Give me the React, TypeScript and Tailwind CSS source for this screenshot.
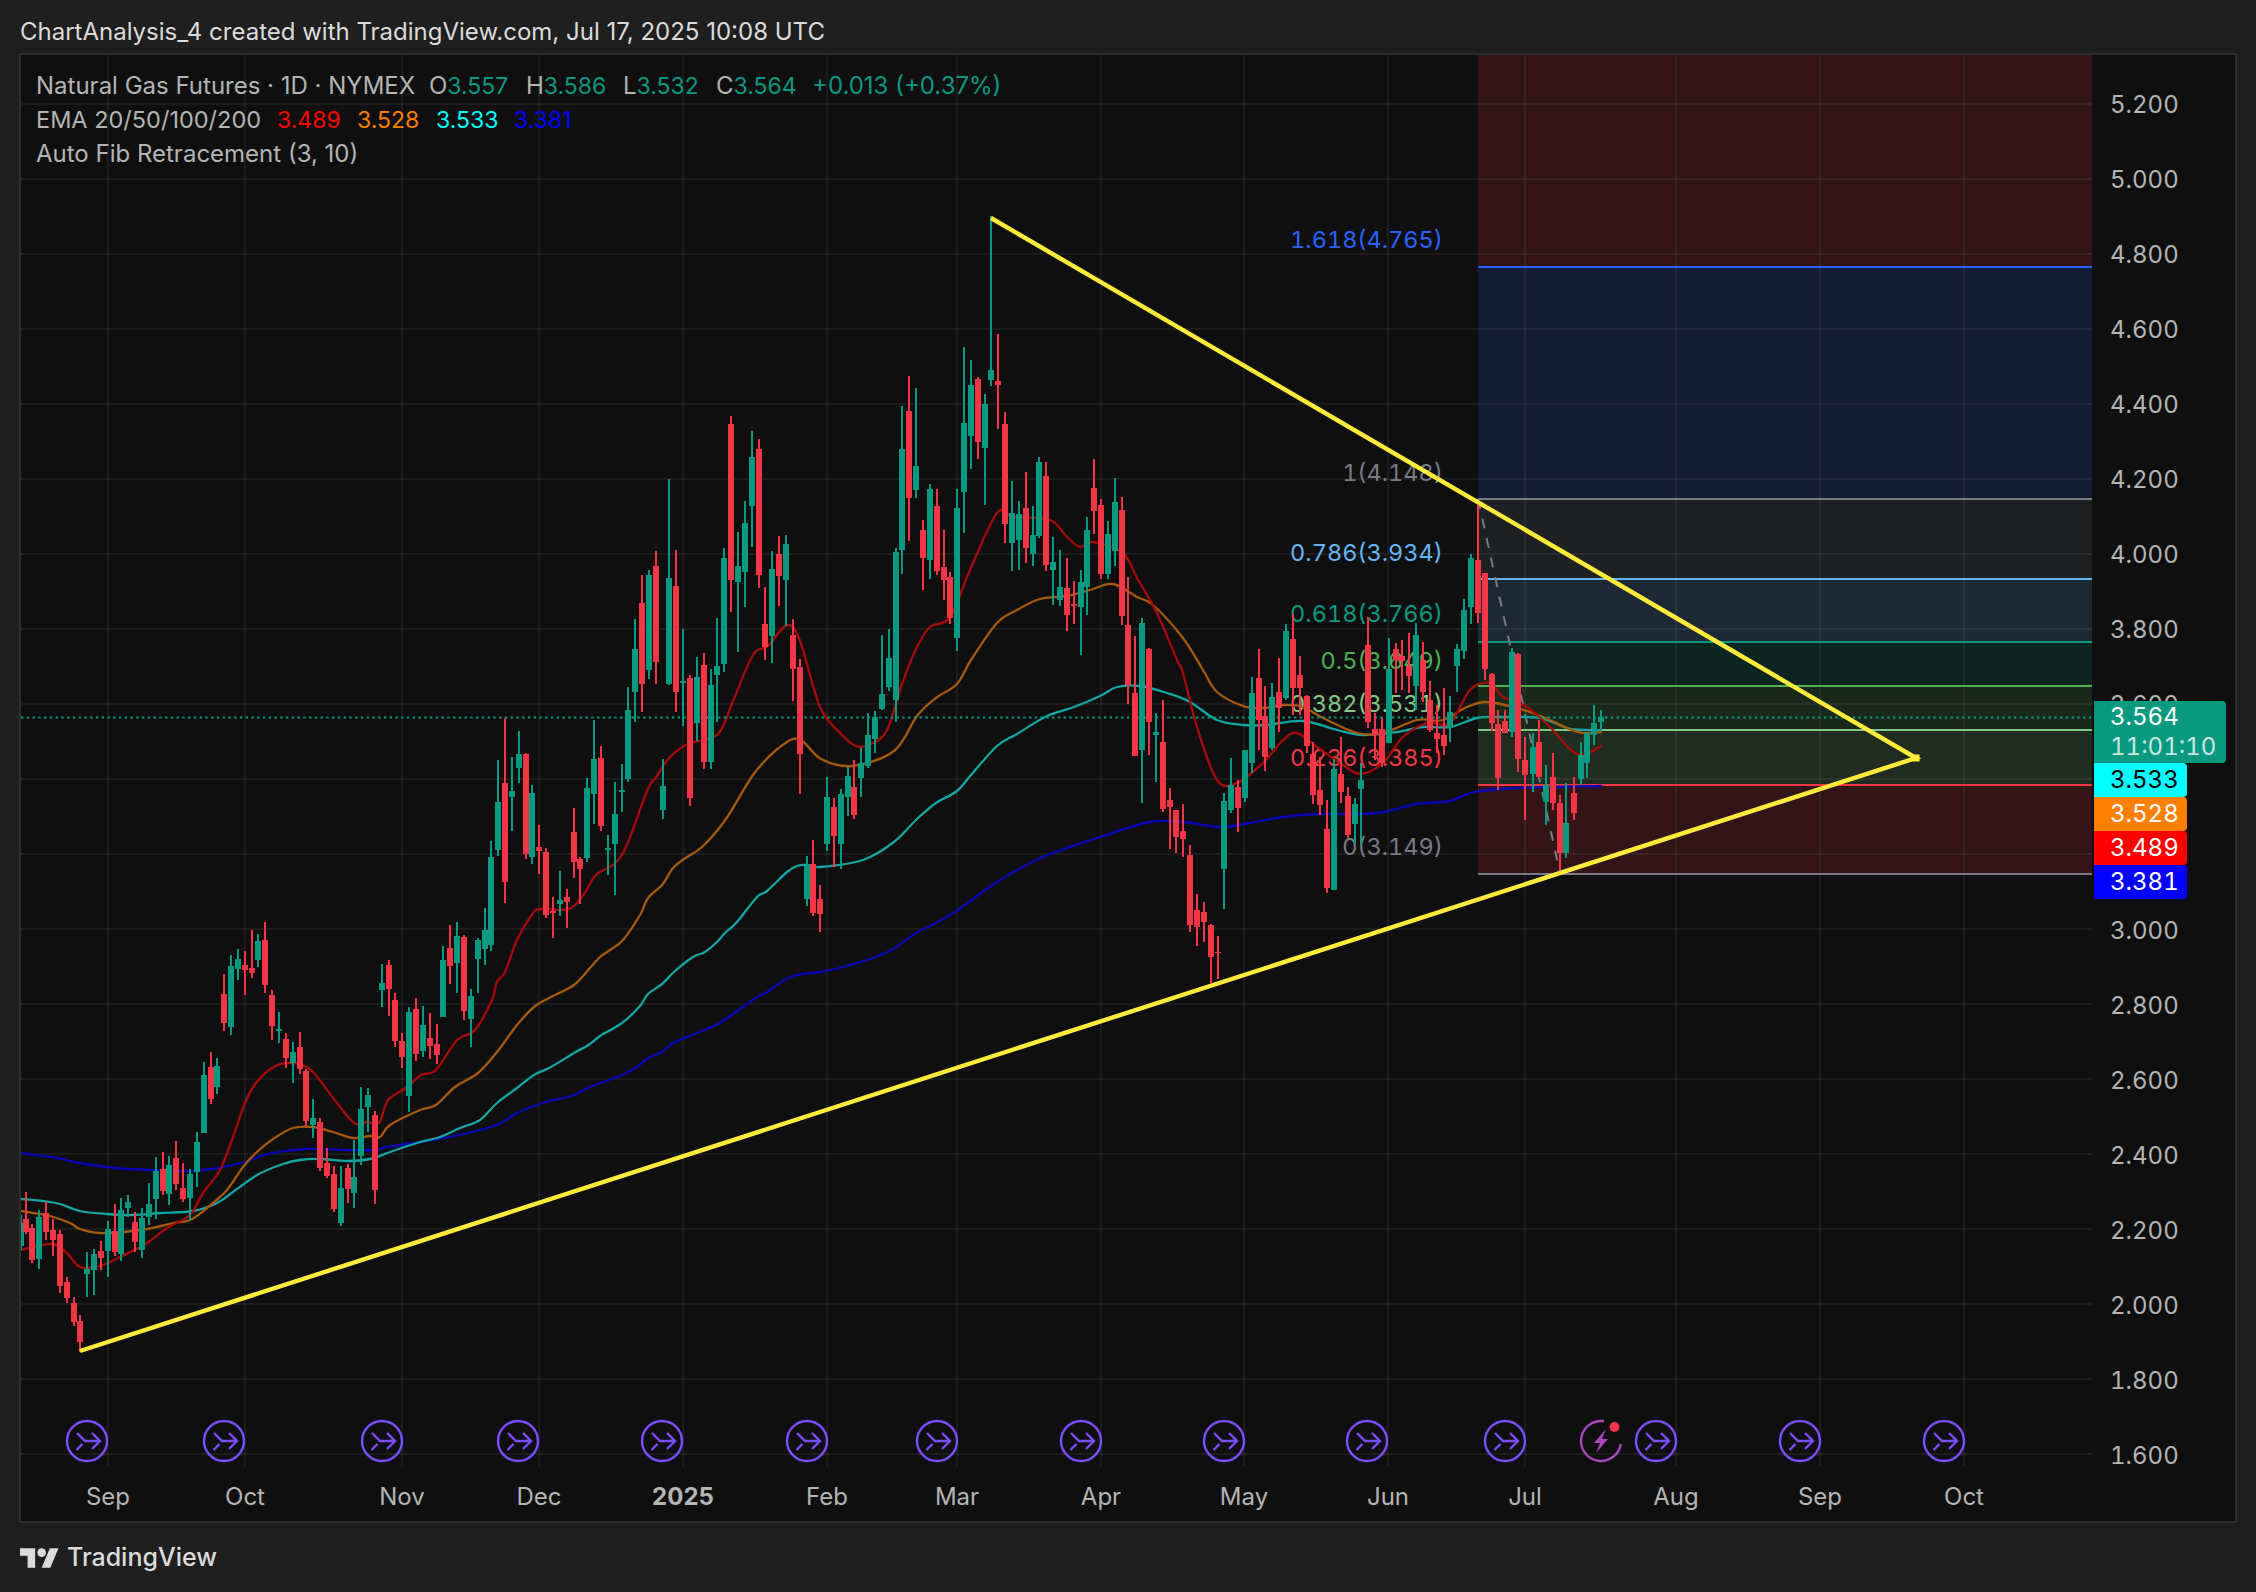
const RED = "#f23645";
const GREEN = "#089981";

// [x, wick top, body top, body bottom, wick bottom, 1 = up]
const candles: number[][] = [
  [21,1215,1223,1246,1250,1],[26,1192,1219,1232,1234,0],[32,1224,1228,1260,1263,0],[39,1210,1217,1259,1269,1],
  [46,1202,1213,1232,1240,0],[53,1219,1230,1240,1256,0],[60,1230,1234,1286,1293,0],[67,1277,1282,1298,1303,0],
  [74,1297,1303,1322,1326,0],[80,1315,1321,1342,1352,0],[87,1252,1269,1274,1297,1],[94,1249,1254,1270,1295,1],
  [101,1241,1251,1258,1270,0],[108,1221,1229,1251,1277,1],[115,1204,1231,1252,1256,0],[121,1198,1210,1254,1261,1],
  [128,1195,1202,1208,1217,1],[135,1212,1222,1242,1252,0],[142,1208,1218,1250,1258,1],[149,1183,1204,1217,1225,1],
  [156,1157,1171,1199,1219,1],[163,1152,1169,1191,1195,0],[169,1156,1165,1194,1205,1],[176,1141,1158,1184,1190,0],
  [183,1163,1188,1199,1202,0],[190,1169,1174,1198,1221,1],[197,1132,1142,1172,1187,1],[204,1062,1075,1133,1133,1],
  [211,1052,1067,1099,1104,0],[217,1058,1066,1087,1094,1],[224,974,994,1023,1031,0],[231,955,966,1027,1035,1],
  [238,949,959,969,980,1],[245,951,965,970,995,0],[252,930,968,973,978,0],[258,934,941,960,967,1],
  [265,922,940,985,993,0],[272,990,995,1026,1040,0],[279,1012,1029,1031,1043,1],[286,1033,1039,1058,1068,0],
  [293,1042,1052,1063,1083,1],[300,1032,1047,1069,1074,0],[306,1069,1071,1121,1126,0],[313,1099,1118,1125,1138,1],
  [320,1118,1122,1168,1171,0],[327,1148,1163,1176,1178,0],[334,1166,1174,1209,1212,0],[341,1166,1188,1223,1226,1],
  [348,1164,1168,1189,1203,0],[354,1140,1177,1193,1208,1],[361,1087,1109,1156,1165,1],[368,1088,1095,1107,1132,1],
  [375,1111,1115,1190,1204,0],[382,964,983,990,1007,1],[389,960,965,989,1016,0],[395,993,1000,1041,1047,0],
  [402,1033,1041,1057,1068,0],[409,1007,1012,1096,1112,1],[416,998,1009,1054,1061,0],[423,1006,1025,1051,1057,1],
  [430,1013,1038,1046,1059,0],[437,1024,1044,1055,1064,0],[443,946,960,1017,1017,1],[450,925,948,966,984,0],
  [457,922,936,963,993,1],[464,935,937,1011,1020,0],[471,989,996,1019,1047,1],[478,938,940,959,993,1],
  [485,908,930,949,965,1],[491,841,857,945,951,1],[498,760,802,850,856,1],[505,718,783,882,903,0],
  [512,757,791,797,831,1],[519,731,754,768,783,1],[526,753,754,854,859,0],[532,785,793,857,864,1],
  [539,825,847,851,874,0],[546,848,852,915,918,0],[553,897,911,913,938,0],[560,871,900,904,916,1],
  [567,889,897,902,928,0],[574,808,832,862,878,0],[580,857,859,869,904,0],[587,778,788,858,862,1],
  [594,720,759,794,824,1],[601,746,758,826,831,0],[608,835,848,850,875,1],[615,782,814,844,895,1],
  [622,764,790,792,812,1],[628,687,710,779,782,1],[635,619,649,692,722,1],[642,575,603,684,712,0],
  [649,570,575,670,679,1],[656,551,566,662,684,0],[663,759,786,810,819,1],[669,479,578,684,685,1],
  [676,550,586,692,712,0],[683,629,681,683,726,1],[690,675,678,798,806,0],[697,657,677,723,741,1],
  [704,653,665,762,769,0],[711,669,685,762,769,1],[717,618,666,675,722,1],[724,548,558,664,672,1],
  [731,416,424,580,612,0],[738,532,566,582,652,1],[745,501,523,572,607,1],[752,431,457,506,547,1],
  [759,439,449,575,588,0],[765,587,624,647,660,0],[772,551,569,636,663,1],[779,536,554,576,606,0],
  [786,535,544,580,626,1],[793,619,635,669,701,0],[800,659,667,754,794,0],[807,856,866,899,906,1],
  [813,840,864,913,916,0],[820,885,899,914,932,0],[827,777,797,844,851,1],[834,798,807,836,867,0],
  [841,789,794,844,869,1],[848,767,776,797,816,1],[854,760,787,815,819,0],[861,748,763,778,797,1],
  [868,713,735,766,768,1],[875,711,717,739,753,1],[882,635,694,709,710,1],[889,629,658,687,691,1],
  [896,548,552,700,722,1],[902,406,449,550,574,1],[909,376,411,498,541,0],[916,388,466,490,498,1],
  [923,520,530,558,590,0],[930,484,489,560,579,1],[937,489,506,571,575,0],[944,530,567,580,600,0],
  [950,572,577,618,624,0],[957,489,508,638,651,1],[964,347,423,492,533,1],[971,360,385,436,469,1],
  [978,377,379,442,459,0],[985,394,404,448,505,1],[991,216,370,380,386,1],[998,334,381,385,429,0],
  [1005,412,424,524,543,0],[1012,481,513,543,571,1],[1019,501,514,540,570,1],[1026,472,508,548,563,0],
  [1033,506,535,554,566,1],[1039,457,462,536,538,1],[1046,462,476,565,571,0],[1053,537,562,570,605,1],
  [1060,550,587,600,606,1],[1067,558,588,615,631,0],[1074,581,604,606,624,0],[1081,570,582,607,655,1],
  [1087,517,530,587,615,1],[1094,459,488,511,534,0],[1101,499,505,574,579,0],[1108,521,534,574,579,1],
  [1115,478,502,551,566,1],[1122,497,510,616,625,0],[1128,577,625,685,704,0],[1135,636,693,756,756,0],
  [1142,618,623,750,803,1],[1149,648,649,722,755,0],[1156,713,732,735,782,1],[1163,700,742,809,812,0],
  [1170,788,800,807,849,0],[1176,810,810,837,853,0],[1183,804,831,839,857,0],[1190,845,855,925,932,0],
  [1197,894,910,927,946,0],[1204,902,912,922,942,0],[1211,924,925,957,983,0],[1218,936,952,953,979,0],
  [1224,793,801,869,909,1],[1231,758,785,810,813,1],[1238,780,787,808,832,0],[1245,750,750,798,802,1],
  [1252,677,693,763,773,1],[1259,649,678,720,750,0],[1265,686,716,757,771,0],[1272,683,697,748,750,1],
  [1279,658,692,708,732,0],[1286,624,631,698,700,1],[1293,614,639,688,715,0],[1300,656,675,688,715,0],
  [1307,695,696,746,753,0],[1313,742,754,795,804,0],[1320,757,790,805,815,0],[1327,800,829,888,893,0],
  [1334,759,769,890,890,1],[1341,737,774,792,803,0],[1348,787,796,835,838,0],[1355,798,804,824,843,1],
  [1361,763,780,789,845,1],[1368,617,645,722,728,0],[1375,713,729,735,760,0],[1382,718,729,763,767,0],
  [1389,638,669,743,743,1],[1396,643,649,660,693,0],[1402,640,656,661,690,0],[1409,633,666,676,693,0],
  [1416,623,635,686,710,1],[1423,642,660,692,702,0],[1430,681,700,730,732,0],[1437,705,733,739,753,0],
  [1444,688,735,746,755,0],[1450,696,712,728,742,1],[1457,644,649,666,692,1],[1464,599,610,651,659,1],
  [1471,554,558,607,624,1],[1478,500,560,613,623,0],[1485,573,573,669,680,0],[1492,673,674,723,731,0],
  [1498,710,724,778,790,0],[1505,710,721,733,733,0],[1512,648,652,732,737,1],[1518,653,654,759,772,0],
  [1525,737,760,775,820,0],[1533,733,747,774,792,1],[1539,720,742,777,778,0],[1546,765,785,802,825,1],
  [1553,753,777,803,810,0],[1560,795,803,853,873,0],[1566,783,823,853,858,1],[1574,777,793,813,820,0],
  [1581,742,755,779,785,1],[1587,733,733,763,778,1],[1594,705,723,735,745,1],[1601,710,717,722,730,1],
];

const ema20 = "21,1250 33,1247 53,1244 67,1253 80,1267 100,1266 120,1257 147,1243 167,1228 190,1215 203,1193 220,1170 233,1137 245,1103 256,1083 272,1068 287,1063 302,1065 314,1073 337,1103 354,1123 367,1122 379,1123 388,1100 406,1088 421,1075 436,1070 457,1040 475,1030 492,1000 497,982 505,972 517,940 531,916 540,909 569,909 584,894 596,875 622,855 647,791 657,776 670,757 688,744 718,734 733,701 753,655 768,646 787,625 800,641 820,707 841,734 856,746 871,744 887,730 902,684 917,647 930,627 950,617 970,570 997,513 1013,517 1050,520 1067,537 1080,547 1093,542 1123,553 1137,578 1157,613 1177,660 1183,673 1197,727 1217,780 1237,783 1263,763 1283,740 1297,733 1317,747 1340,763 1360,774 1383,763 1403,737 1427,723 1450,723 1470,690 1490,683 1503,697 1527,707 1550,727 1577,754 1602,746";
const ema50 = "21,1211 33,1213 50,1216 70,1223 80,1229 100,1233 133,1231 157,1227 173,1223 190,1220 207,1208 227,1190 243,1167 257,1152 273,1139 293,1128 313,1127 333,1132 353,1138 370,1136 380,1137 390,1125 420,1110 436,1105 455,1087 478,1073 497,1052 517,1025 534,1007 551,997 574,985 590,968 600,957 610,950 623,940 640,915 648,898 662,885 673,868 684,859 703,846 726,819 756,771 787,742 802,741 821,759 852,766 894,751 917,716 936,698 957,684 971,660 997,623 1017,610 1040,599 1067,596 1090,590 1113,584 1137,597 1153,605 1183,638 1203,670 1217,692 1243,706 1263,708 1283,705 1303,707 1323,718 1357,733 1383,733 1417,720 1443,720 1467,707 1487,702 1517,708 1543,717 1567,728 1583,733 1602,732";
const ema100 = "21,1199 43,1201 60,1204 80,1211 107,1214 133,1215 160,1213 193,1211 217,1203 233,1192 257,1175 283,1164 300,1160 320,1159 347,1161 370,1159 390,1152 417,1143 440,1137 460,1128 480,1120 497,1103 517,1088 534,1075 551,1067 574,1053 590,1044 600,1036 622,1023 640,1006 648,994 662,984 675,971 693,957 705,952 718,941 725,933 737,922 757,897 767,891 787,872 797,866 807,865 820,867 863,860 894,842 917,819 936,803 957,791 971,775 997,746 1017,734 1047,716 1074,707 1100,696 1117,687 1140,686 1167,693 1190,702 1217,720 1243,725 1267,725 1303,721 1337,730 1363,735 1397,732 1423,727 1450,727 1477,718 1500,717 1540,718 1567,728 1587,730 1602,730";
const ema200 = "21,1153 57,1158 80,1163 115,1168 153,1170 191,1171 218,1168 245,1162 268,1154 306,1149 344,1150 375,1150 387,1147 421,1142 459,1135 497,1125 517,1113 543,1103 574,1095 590,1087 622,1075 637,1067 648,1058 662,1052 673,1043 697,1033 718,1024 733,1014 757,997 767,992 788,978 803,974 820,972 843,967 873,958 895,948 903,942 918,932 930,926 955,912 997,882 1043,857 1100,837 1150,822 1183,822 1220,827 1250,823 1283,817 1317,814 1357,814 1383,812 1417,804 1450,801 1470,793 1500,789 1550,787 1602,786";

// catmull-rom through the points so the averages don't look angular
const toPath = (pts: string) => {
  const p = pts.split(" ").map((s) => s.split(",").map(Number));
  let d = `M${p[0][0]} ${p[0][1]}`;
  for (let i = 0; i < p.length - 1; i++) {
    const a = p[Math.max(i - 1, 0)];
    const b = p[i];
    const c = p[i + 1];
    const e = p[Math.min(i + 2, p.length - 1)];
    const c1x = b[0] + (c[0] - a[0]) / 6;
    const c1y = b[1] + (c[1] - a[1]) / 6;
    const c2x = c[0] - (e[0] - b[0]) / 6;
    const c2y = c[1] - (e[1] - b[1]) / 6;
    d += `C${c1x.toFixed(1)} ${c1y.toFixed(1)} ${c2x.toFixed(1)} ${c2y.toFixed(1)} ${c[0]} ${c[1]}`;
  }
  return d;
};

const prices = ["5.200","5.000","4.800","4.600","4.400","4.200","4.000","3.800","3.600","3.400","3.200","3.000","2.800","2.600","2.400","2.200","2.000","1.800","1.600"];
const months: [string, number, boolean?][] = [["Sep",108],["Oct",245],["Nov",402],["Dec",539],["2025",683,true],["Feb",827],["Mar",957],["Apr",1101],["May",1244],["Jun",1388],["Jul",1525],["Aug",1676],["Sep",1820],["Oct",1964]];
const events = [87,224,382,518,662,807,937,1081,1224,1367,1505,1656,1800,1944];

// fib bands: top, bottom, colour
const bands: [number, number, string][] = [
  [55,267,RED],[267,499,"#2962ff"],[499,579,"#787b86"],[579,642,"#64b5f6"],[642,686,GREEN],[686,730,"#4caf50"],[730,785,"#81c784"],[785,874,RED],
];
const fibLines: [number, string][] = [[267,"#2962ff"],[499,"#787b86"],[579,"#64b5f6"],[642,GREEN],[686,"#4caf50"],[730,"#81c784"],[785,RED],[874,"#787b86"]];
const fibLabels: [string, number, string][] = [
  ["1.618(4.765)",239,"#2962ff"],["1(4.148)",472,"#787b86"],["0.786(3.934)",552,"#64b5f6"],["0.618(3.766)",613,GREEN],
  ["0.5(3.649)",660,"#4caf50"],["0.382(3.531)",703,"#81c784"],["0.236(3.385)",757,RED],["0(3.149)",846,"#787b86"],
];

const tags = [
  { v: "3.533", cls: "bg-[#00ffff] text-black" },
  { v: "3.528", cls: "bg-[#ff7f00] text-white" },
  { v: "3.489", cls: "bg-[#ff0000] text-white" },
  { v: "3.381", cls: "bg-[#0000ff] text-white" },
];

const ohlc = [
  { k: "O", v: "3.557", w: "w-[97px]" },
  { k: "H", v: "3.586", w: "w-[97px]" },
  { k: "L", v: "3.532", w: "w-[93px]" },
  { k: "C", v: "3.564", w: "w-[96px]" },
];

const Chart = () => (
  <svg className="block w-[2071px] h-[1411px] shrink-0" viewBox="21 55 2071 1411">
    {bands.map(([a, b, c]) => (
      <rect key={a} x={1478} y={a} width={614} height={b - a} fill={c} fillOpacity={0.16} />
    ))}
    {prices.map((p, i) => (
      <line key={p} x1={21} x2={2092} y1={104 + i * 75} y2={104 + i * 75} stroke="#fff" strokeOpacity={0.055} strokeWidth={2} />
    ))}
    {months.map(([m, x]) => (
      <line key={m + x} x1={x} x2={x} y1={55} y2={1466} stroke="#fff" strokeOpacity={0.055} strokeWidth={2} />
    ))}
    {fibLines.map(([y, c]) => (
      <line key={y} x1={1478} x2={2092} y1={y} y2={y} stroke={c} strokeWidth={2} />
    ))}
    {fibLabels.map(([t, y, c]) => (
      <text key={t} x={1443} y={y} fill={c} textAnchor="end" dominantBaseline="central" fontSize={23.5} fontFamily="Inter, sans-serif" className="tabular-nums">{t}</text>
    ))}
    <line x1={1478} y1={499} x2={1560} y2={873} stroke="#787b86" strokeWidth={2} strokeDasharray="10 10" />
    <path d={toPath(ema200)} fill="none" stroke="#0606b4" strokeWidth={2.3} />
    <path d={toPath(ema100)} fill="none" stroke="#14a5a5" strokeWidth={2.3} />
    <path d={toPath(ema50)} fill="none" stroke="#a85a0c" strokeWidth={2.3} />
    <path d={toPath(ema20)} fill="none" stroke="#a80a0a" strokeWidth={2.3} />
    <line x1={21} x2={2092} y1={717.5} y2={717.5} stroke={GREEN} strokeWidth={2} strokeDasharray="2.4 3.36" />
    {candles.map(([x, wt, bt, bb, wb, up]) => (
      <g key={x} fill={up ? GREEN : RED} shapeRendering="crispEdges">
        <rect x={x - 1} y={wt} width={2} height={wb - wt} />
        <rect x={x - 3} y={bt} width={6} height={bb - bt} />
      </g>
    ))}
    <polyline points="80,1351 1916,758 991,218" fill="none" stroke="#ffeb3b" strokeWidth={4.4} />
    <rect x={1912.5} y={754.5} width={7} height={7} fill="#ffeb3b" />
    {events.map((x) => (
      <g key={x} transform={`translate(${x} 1441)`} fill="none" stroke="#7c4dff" strokeWidth={2.4}>
        <circle r={20} />
        <path d="M-10 -8L-2 0H12M5 -8L13 0L5 8M-10.5 9L-4.5 3" />
      </g>
    ))}
    <g transform="translate(1601 1441)" fill="none" stroke="#ab47bc" strokeWidth={2.4}>
      <path d="M3 -19.8A20 20 0 1 0 19.8 3" />
      <path d="M5 -12L-7 2H-1L-5 12L7 -2H1Z" fill="#ab47bc" stroke="none" />
    </g>
    <circle cx={1614.5} cy={1427} r={5} fill={RED} />
  </svg>
);

const App = () => {
  return (
    <div className="w-[2256px] h-[1592px] overflow-hidden flex flex-col bg-[#1f1f1f] font-[family-name:Inter,sans-serif]">
      <div className="h-[53px] shrink-0 pl-[20px] pt-[11px] flex items-center text-[24px] text-[#dbdbdb] whitespace-nowrap">
        ChartAnalysis_4 created with TradingView.com, Jul 17, 2025 10:08 UTC
      </div>

      <div className="relative ml-[19px] w-[2218px] h-[1470px] shrink-0 flex border-2 border-[#2e2e2e] bg-[#0f0f0f]">
        <div className="w-[2071px] shrink-0 flex flex-col">
          <Chart />
          <div className="relative flex-1 text-[24px] text-[#b4b4b4]">
            {months.map(([m, x, bold]) => (
              <span
                key={m + x}
                className={bold ? "absolute top-[31px] -translate-x-1/2 -translate-y-1/2 font-bold" : "absolute top-[31px] -translate-x-1/2 -translate-y-1/2"}
                style={{ left: x - 21 }}
              >
                {m}
              </span>
            ))}
          </div>
        </div>

        <div className="relative flex-1 pt-[12px] text-[24px] text-[#b4b4b4] tabular-nums">
          {prices.map((p) => (
            <div key={p} className="h-[75.1px] pl-[18px] flex items-center">{p}</div>
          ))}
          <div className="absolute left-[2px] top-[646px] flex flex-col items-start text-[24px]">
            <div className="w-[132px] h-[62px] rounded-r-[4px] bg-[#089981] pl-[16px] flex flex-col justify-center leading-[30px] text-white">
              <span>3.564</span>
              <span className="text-[#c8e6e0]">11:01:10</span>
            </div>
            {tags.map((t) => (
              <div key={t.v} className={`w-[93px] h-[34px] rounded-r-[4px] pl-[16px] flex items-center ${t.cls}`}>{t.v}</div>
            ))}
          </div>
        </div>

        {/* legend sits on the chart */}
        <div className="absolute left-[15px] top-[14px] flex flex-col text-[24px] leading-[34px] text-[#b4b4b4] whitespace-nowrap">
          <div className="flex">
            <span className="w-[393px]">Natural Gas Futures · 1D · NYMEX</span>
            {ohlc.map((o) => (
              <span key={o.k} className={o.w}>{o.k}<span className="text-[23px] text-[#089981]">{o.v}</span></span>
            ))}
            <span className="text-[#089981]">+0.013 (+0.37%)</span>
          </div>
          <div className="flex">
            <span className="w-[241px] text-[23.5px]">EMA 20/50/100/200</span>
            <span className="w-[80px] text-[23px] text-[#ff0000]">3.489</span>
            <span className="w-[79px] text-[23px] text-[#ff7f00]">3.528</span>
            <span className="w-[78px] text-[23px] text-[#00ffff]">3.533</span>
            <span className="text-[23px] text-[#0000ff]">3.381</span>
          </div>
          <div>Auto Fib Retracement (3, 10)</div>
        </div>
      </div>

      <div className="flex-1 pl-[20px] flex items-center gap-[8px]">
        <svg className="w-[39px] h-[20px]" viewBox="0 4 36 18" fill="#dbdbdb">
          <path d="M14 22H7V11H0V4h14v18zM28 22h-8l7.5-18h8L28 22z" />
          <circle cx="20" cy="8" r="4" />
        </svg>
        <span className="text-[25px] font-medium text-[#dbdbdb]">TradingView</span>
      </div>
    </div>
  );
};

export default App;
